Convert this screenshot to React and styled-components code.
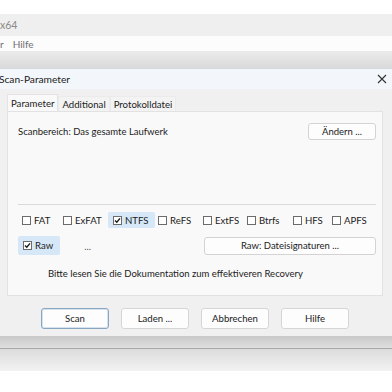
import React from "react";
import styled, { createGlobalStyle } from "styled-components";

const GlobalStyle = createGlobalStyle`
    html, body {
        margin: 0;
        padding: 0;
        background: #ffffff;
        overflow: hidden;
    }
    body {
        font-family: Lato, "Noto Sans", sans-serif;
        color: #1b1b1b;
    }
`;

const Screen = styled.div`
    width: 392px;
    height: 392px;
    display: flex;
    flex-direction: column;
    background: #ffffff;
`;

const TopGap = styled.div`
    height: 14px;
    background: #ffffff;
`;

const AppTitle = styled.div`
    height: 22px;
    background: #efefef;
    display: flex;
    align-items: center;
    font-size: 10.5px;
    color: #8a8a8a;
`;

const MenuBar = styled.div`
    height: 15px;
    background: #fcfcfc;
    display: flex;
    align-items: center;
    gap: 9px;
    font-size: 10px;
    color: #707070;
`;

const BackShade = styled.div`
    height: 17px;
    background: linear-gradient(#ebebeb, #dadada);
`;

const Dialog = styled.div`
    display: flex;
    flex-direction: column;
    background: #f0f0f0;
    border-top: 1px solid #d2d8de;
`;

const TitleBar = styled.div`
    height: 20px;
    background: #f3f7fb;
    display: flex;
    align-items: center;
    justify-content: space-between;
    padding: 0 4px 0 0;
    font-size: 10.2px;
    color: #1a1a1a;
`;

const TitleText = styled.span`
    margin-left: -1px;
`;

const CloseIcon = styled.svg`
    width: 10px;
    height: 10px;
    margin-right: 1px;
`;

const Body = styled.div`
    padding: 5px 9px 7px 7px;
    display: flex;
    flex-direction: column;
`;

const TabStrip = styled.div`
    display: flex;
    align-items: flex-end;
    height: 17px;
`;

const Tab = styled.div`
    height: ${(p) => (p.$active ? "17px" : "15px")};
    padding: 0 3px;
    display: flex;
    align-items: center;
    font-size: 9.6px;
    background: ${(p) => (p.$active ? "#f9f9f9" : "#f3f3f3")};
    border: 1px solid ${(p) => (p.$active ? "#e4e4e4" : "#ebebeb")};
    border-bottom: none;
    box-sizing: border-box;
    color: #1b1b1b;
`;

const Panel = styled.div`
    background: #f9f9f9;
    border: 1px solid #e2e2e2;
    padding: 11px 6px 15px 10px;
    display: flex;
    flex-direction: column;
`;

const RangeRow = styled.div`
    display: flex;
    align-items: center;
    justify-content: space-between;
    height: 17px;
    font-size: 9.5px;
`;

const SmallButton = styled.button`
    font-family: inherit;
    font-size: 9.5px;
    color: #1b1b1b;
    background: #fdfdfd;
    border: 1px solid #d3d3d3;
    border-radius: 3px;
    height: ${(p) => p.$h || 17}px;
    width: ${(p) => p.$w}px;
    padding: 0;
    display: flex;
    align-items: center;
    justify-content: center;
`;

const Separator = styled.div`
    height: 1px;
    background: #dadada;
    margin-top: 64px;
`;

const FsRow = styled.div`
    display: grid;
    grid-template-columns: 41px 50px 45px 45px 44px 46px 39px auto;
    margin-top: 7px;
    margin-left: -1px;
    align-items: center;
`;

const Option = styled.label`
    display: flex;
    align-items: center;
    gap: 3px;
    height: ${(p) => p.$h || 16}px;
    padding: 0 ${(p) => p.$pr || 5}px 0 5px;
    font-size: 9.6px;
    color: #1b1b1b;
    background: ${(p) => (p.$checked ? "#d6e8f7" : "transparent")};
    border-radius: 2px;
    justify-self: start;
    white-space: nowrap;
`;

const Box = styled.span`
    width: 7px;
    height: 7px;
    border: 1px solid #6b6b6b;
    background: #ffffff;
    display: flex;
    align-items: center;
    justify-content: center;
`;

const RawRow = styled.div`
    display: flex;
    align-items: center;
    margin-top: 8px;
`;

const Ellipsis = styled.span`
    font-size: 9.5px;
    color: #555;
    margin-left: 24px;
    flex: 1;
    padding-top: 2px;
`;

const Note = styled.div`
    font-size: 9.5px;
    margin-top: 11px;
    padding-left: 30px;
    height: 14px;
    display: flex;
    align-items: center;
`;

const ButtonRow = styled.div`
    display: flex;
    gap: 12px;
    padding-left: 34px;
    margin-top: 12px;
`;

const DialogButton = styled.button`
    font-family: inherit;
    font-size: 9.6px;
    color: #1b1b1b;
    width: 68px;
    height: 21px;
    background: #fdfdfd;
    border: 1px solid ${(p) => (p.$focused ? "#88a6bf" : "#d6d6d6")};
    box-shadow: ${(p) => (p.$focused ? "inset 0 0 0 1px #d6e3ee" : "none")};
    border-radius: 3px;
    padding: 0;
`;

const Shadow = styled.div`
    height: 35px;
    display: flex;
    flex-direction: column;
`;

const ShadowTop = styled.div`
    height: 12px;
    background: linear-gradient(#c9c9c9, #dedede);
`;

const ShadowLine = styled.div`
    height: 1px;
    background: #a9a9a9;
`;

const ShadowBottom = styled.div`
    flex: 1;
    background: linear-gradient(#dcdcdc, #f2f2f2);
`;

const Check = () => (
    <svg width="7" height="7" viewBox="0 0 7 7">
        <path d="M1 3.6 L2.8 5.3 L6 1.4" fill="none" stroke="#1a1a1a" strokeWidth="1.4" />
    </svg>
);

const CheckOption = ({ label, checked, h, pr }) => (
    <Option $checked={checked} $h={h} $pr={pr}>
        <Box>{checked && <Check />}</Box>
        {label}
    </Option>
);

const filesystems = [
    { label: "FAT" },
    { label: "ExFAT" },
    { label: "NTFS", checked: true, pr: 7 },
    { label: "ReFS" },
    { label: "ExtFS" },
    { label: "Btrfs" },
    { label: "HFS" },
    { label: "APFS" },
];

const App = () => {
    return (
        <Screen>
            <GlobalStyle />
            <TopGap />
            <AppTitle>x64</AppTitle>
            <MenuBar>
                <span>r</span>
                <span>Hilfe</span>
            </MenuBar>
            <BackShade />
            <Dialog>
                <TitleBar>
                    <TitleText>Scan-Parameter</TitleText>
                    <CloseIcon viewBox="0 0 10 10">
                        <path d="M1 1 L9 9 M9 1 L1 9" stroke="#333" strokeWidth="1.1" />
                    </CloseIcon>
                </TitleBar>
                <Body>
                    <TabStrip>
                        <Tab $active>Parameter</Tab>
                        <Tab>Additional</Tab>
                        <Tab>Protokolldatei</Tab>
                    </TabStrip>
                    <Panel>
                        <RangeRow>
                            <span>Scanbereich: Das gesamte Laufwerk</span>
                            <SmallButton $w={68}>Ändern ...</SmallButton>
                        </RangeRow>
                        <Separator />
                        <FsRow>
                            {filesystems.map((fs) => (
                                <CheckOption key={fs.label} {...fs} />
                            ))}
                        </FsRow>
                        <RawRow>
                            <CheckOption label="Raw" checked h={19} pr={7} />
                            <Ellipsis>...</Ellipsis>
                            <SmallButton $w={172} $h={18}>
                                Raw: Dateisignaturen ...
                            </SmallButton>
                        </RawRow>
                        <Note>Bitte lesen Sie die Dokumentation zum effektiveren Recovery</Note>
                    </Panel>
                    <ButtonRow>
                        <DialogButton $focused>Scan</DialogButton>
                        <DialogButton>Laden ...</DialogButton>
                        <DialogButton>Abbrechen</DialogButton>
                        <DialogButton>Hilfe</DialogButton>
                    </ButtonRow>
                </Body>
            </Dialog>
            <Shadow>
                <ShadowTop />
                <ShadowLine />
                <ShadowBottom />
            </Shadow>
        </Screen>
    );
};

export default App;
